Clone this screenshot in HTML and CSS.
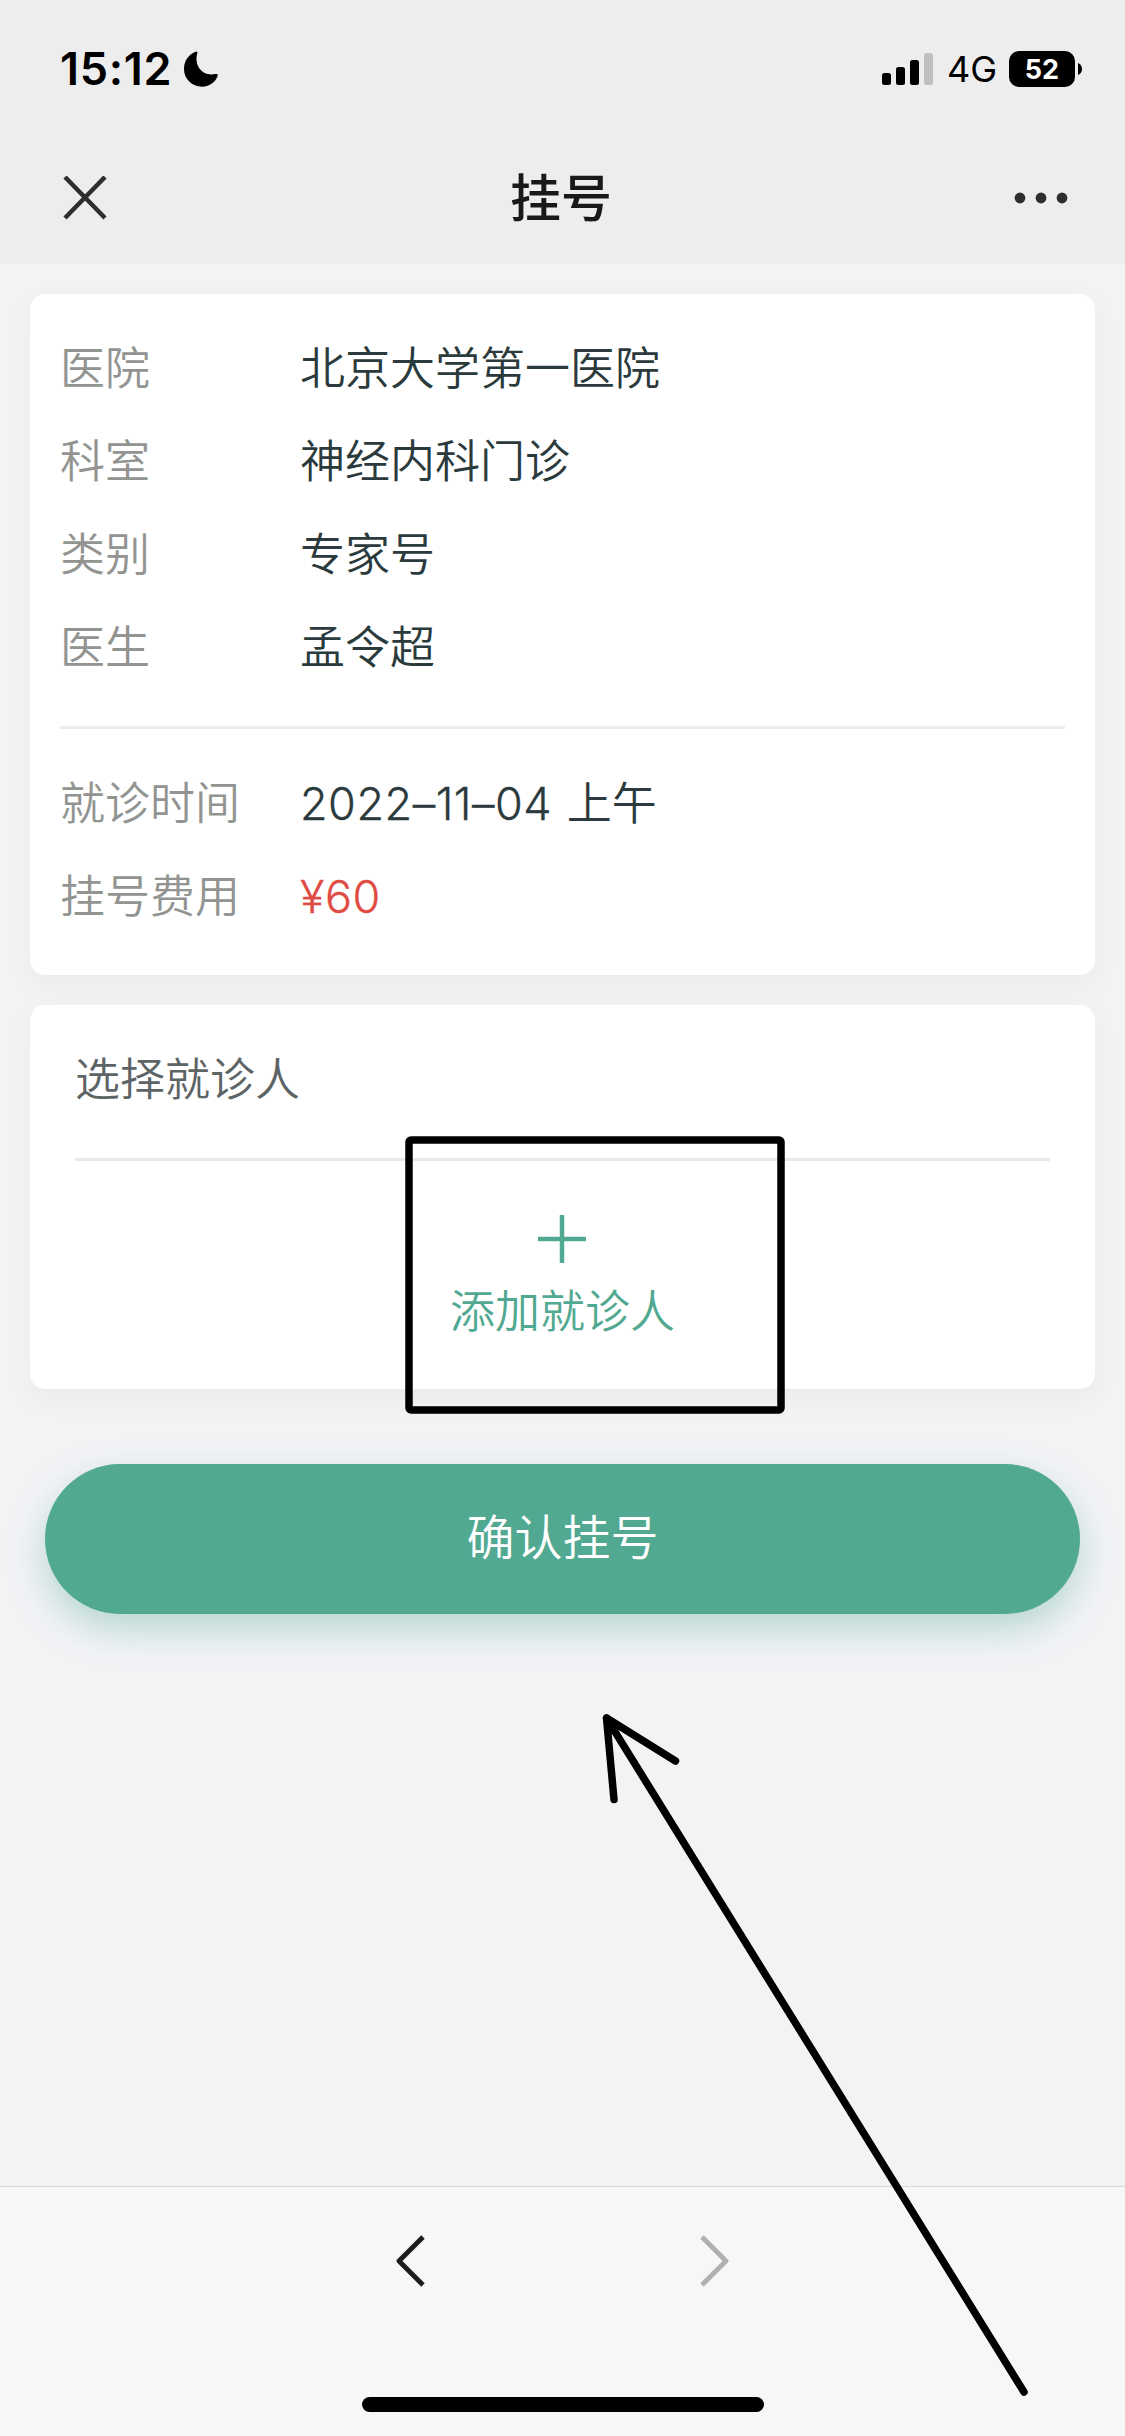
FILE: index.html
```html
<!DOCTYPE html>
<html lang="zh-CN">
<head>
<meta charset="utf-8">
<title>挂号</title>
<link rel="stylesheet" href="styles.css">
</head>
<body>
<div class="screen">
  <header class="header">
    <div class="status">
      <div class="clock">
        <span class="time">15:12</span>
        <svg class="moon" width="36" height="36" viewBox="0 0 36 36"><path d="M12.6 .7C13.8 .1 14.7 .9 14.3 2.2C10.9 14 18.7 25.6 32.3 23.1C34.2 22.7 35.1 23.2 34.6 24.9C32.3 31.3 26 35.7 19 35.7C9 35.7 1 28 1 18C1 10 5.300 3.700 12.600 .700Z"/></svg>
      </div>
      <div class="indicators">
        <svg class="signal" width="51" height="32" viewBox="0 0 51 32"><rect y="20" width="9" height="12" rx="2.500"/><rect x="14" y="14" width="9" height="18" rx="2.500"/><rect x="28" y="7" width="9" height="25" rx="2.500"/><rect class="signal-off" x="42" y="0" width="9" height="32" rx="2.500"/></svg>
        <span class="network">4G</span>
        <span class="battery">52</span>
        <svg class="battery-tip" width="4" height="12" viewBox="0 0 4 12"><path d="M0 0C2.500 1 4 3.300 4 6S2.500 11 0 12Z"/></svg>
      </div>
    </div>
    <nav class="navbar">
      <svg class="close" width="44" height="44" viewBox="0 0 44 44"><path d="M2 1L42 42M42 1L2 42"/></svg>
      <h1 class="title">挂号</h1>
      <svg class="more" width="54" height="12" viewBox="0 0 54 12"><circle cx="6" cy="6" r="5.400"/><circle cx="27" cy="6" r="5.400"/><circle cx="48" cy="6" r="5.400"/></svg>
    </nav>
  </header>
  <main class="content">
    <section class="card details">
      <dl class="rows">
        <div class="row"><dt>医院</dt><dd>北京大学第一医院</dd></div>
        <div class="row"><dt>科室</dt><dd>神经内科门诊</dd></div>
        <div class="row"><dt>类别</dt><dd>专家号</dd></div>
        <div class="row"><dt>医生</dt><dd>孟令超</dd></div>
      </dl>
      <dl class="rows rows-split">
        <div class="row"><dt>就诊时间</dt><dd><span class="date">2022–11–04</span> 上午</dd></div>
        <div class="row"><dt>挂号费用</dt><dd class="price">¥60</dd></div>
      </dl>
    </section>
    <section class="card patient">
      <h2 class="patient-title">选择就诊人</h2>
      <div class="add">
        <svg class="plus" width="49" height="48" viewBox="0 0 49 48"><path d="M24 0V48M0 24H48"/></svg>
        <span class="add-label">添加就诊人</span>
      </div>
    </section>
    <button class="confirm" type="button">确认挂号</button>
  </main>
  <footer class="toolbar">
    <div class="history">
      <svg class="chevron" width="30" height="54" viewBox="0 0 30 54"><path d="M27 3L3 27L27 51"/></svg>
      <svg class="chevron chevron-off" width="30" height="54" viewBox="0 0 30 54"><path d="M3 3L27 27L3 51"/></svg>
    </div>
    <div class="home"></div>
  </footer>
  <svg class="markup" width="1125" height="2436" viewBox="0 0 1125 2436"><rect x="409" y="1140" width="372" height="270" rx="2"/><path d="M1024 2392L606.500 1718L614 1799.500M606.500 1718L675.500 1761"/></svg>
</div>
</body>
</html>
```
FILE: styles.css
```css
* { box-sizing: border-box; margin: 0; padding: 0; }
body {
  font-family: Inter, "Noto Sans CJK SC", sans-serif;
  font-size: 45px;
  font-weight: 350;
  color: #2b3a3c;
}
svg { display: block; flex: none; }
.screen {
  position: relative;
  display: flex;
  flex-direction: column;
  width: 1125px;
  height: 2436px;
  overflow: hidden;
  background: #f3f3f6;
}
.header { height: 264px; background: #ededed; }
.status {
  display: flex;
  justify-content: space-between;
  height: 132px;
  padding: 0 43px 0 60px;
  color: #000;
}
.clock, .indicators { display: flex; align-items: center; height: 138px; }
.clock { gap: 11px; }
.time { padding-bottom: 1px; font-size: 45px; font-weight: 600; letter-spacing: .7px; }
.network { margin-left: 14px; width: 50px; font-size: 36px; font-weight: 400; white-space: nowrap; }
.battery {
  width: 66px;
  height: 36px;
  margin-left: 12px;
  border-radius: 10px;
  background: #000;
  color: #fff;
  font-size: 27px;
  font-weight: 700;
  line-height: 37px;
  text-align: center;
}
.battery-tip { margin-left: 3px; }
.signal-off { fill: #bfbfbf; }
.navbar {
  display: flex;
  align-items: center;
  justify-content: space-between;
  height: 132px;
  padding: 0 57px 0 63px;
}
.close { fill: none; stroke: #2e2e2e; stroke-width: 4.500; }
.title { padding: 2px 0 0 1px; color: #191919; font-size: 51px; font-weight: 500; line-height: 70px; }
.more { fill: #2e2e2e; }
.content { display: flex; flex: 1; flex-direction: column; padding: 30px 30px 0; }
.card {
  border-radius: 15px;
  background: #fff;
  box-shadow: 0 9px 30px rgba(0, 0, 0, .04);
}
.details { height: 681px; padding: 28px 30px 0; }
.rows-split { margin-top: 32px; padding-top: 28px; border-top: 3px solid #ededed; }
.row { display: flex; height: 93px; line-height: 94px; }
dt { width: 240px; color: #929492; }
.date { margin-right: 2px; letter-spacing: .5px; -webkit-text-stroke: .3px; }
.price { color: #e04b43; letter-spacing: .6px; -webkit-text-stroke: .3px; }
.patient { height: 384px; margin-top: 30px; padding: 0 45px; }
.patient-title {
  height: 156px;
  border-bottom: 3px solid #e9e9eb;
  color: #5d6465;
  font-size: 45px;
  font-weight: 350;
  line-height: 150px;
}
.add { display: flex; flex-direction: column; align-items: center; padding-top: 54px; color: #51a991; }
.plus { stroke: #51a991; stroke-width: 4.500; }
.add-label { margin-top: 15px; line-height: 67px; }
.confirm {
  height: 150px;
  margin: 75px 15px 0;
  border: 0;
  border-radius: 75px;
  background: #51a991;
  box-shadow: 0 15px 36px rgba(81, 169, 145, .38);
  color: #fff;
  font: inherit;
  font-size: 48px;
  line-height: 144px;
  padding-bottom: 2px;
}
.toolbar {
  display: flex;
  flex-direction: column;
  align-items: center;
  justify-content: space-between;
  height: 250px;
  padding: 47px 0 24px;
  border-top: 1px solid #d8d8da;
  background: #f7f7f7;
}
.history { display: flex; gap: 273px; }
.chevron { fill: none; stroke: #1c1c1c; stroke-width: 4.800; stroke-linejoin: round; }
.chevron-off { stroke: #b0b0b0; }
.home { width: 402px; height: 15px; border-radius: 8px; background: #000; }
.markup {
  position: absolute;
  top: 0;
  left: 0;
  fill: none;
  stroke: #000;
  stroke-width: 7.500;
  stroke-linecap: round;
  stroke-linejoin: round;
  pointer-events: none;
}
```
